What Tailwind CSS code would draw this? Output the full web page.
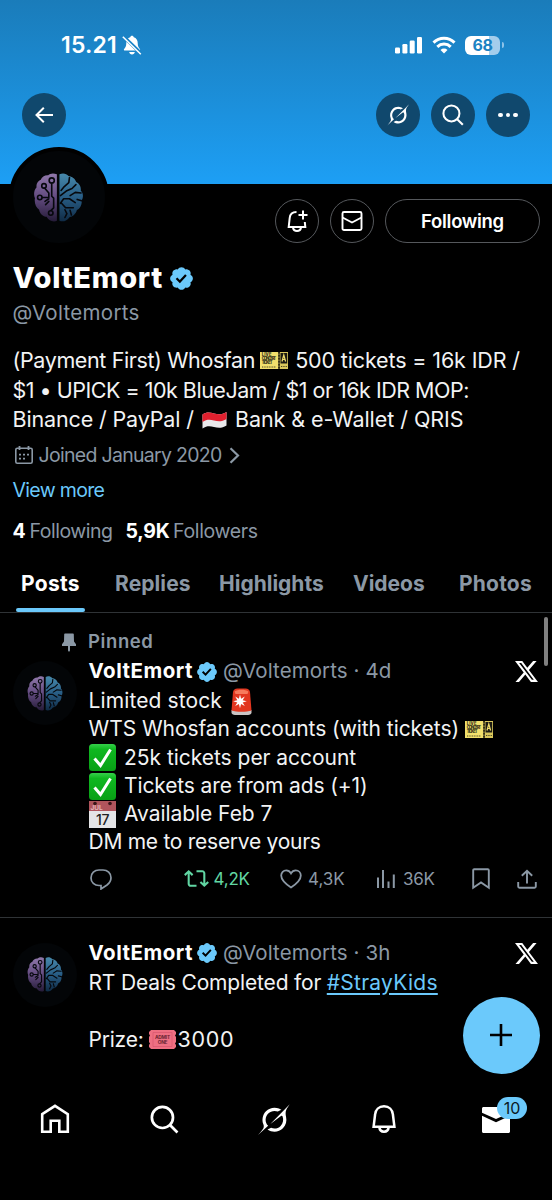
<!DOCTYPE html>
<html lang="en">
<head>
<meta charset="utf-8">
<title>VoltEmort (@Voltemorts)</title>
<script src="https://cdn.jsdelivr.net/npm/@tailwindcss/browser@4"></script>
</head>
<body class="bg-black">
<svg class="absolute size-0">
  <defs>
    <linearGradient id="gl" x1="0" y1="0" x2="0" y2="1"><stop offset="0" stop-color="#9078aa"/><stop offset=".5" stop-color="#634b80"/><stop offset="1" stop-color="#251b38"/></linearGradient>
    <linearGradient id="gr" x1="0" y1="0" x2="0" y2="1"><stop offset="0" stop-color="#4789ab"/><stop offset=".5" stop-color="#285d85"/><stop offset="1" stop-color="#102b45"/></linearGradient>
    <linearGradient id="gg" x1="0" y1="0" x2="0" y2="1"><stop offset="0" stop-color="#35d04a"/><stop offset=".2" stop-color="#0fb820"/><stop offset="1" stop-color="#08a015"/></linearGradient>
    <symbol id="brain" viewBox="38 36 156 152">
      <path fill="url(#gl)" d="M111 40C100 35 90 37 84 43C74 42 64 48 61 57C52 61 46 70 48 80C40 88 38 104 43 114C40 128 46 144 56 150C58 162 68 172 79 172C86 184 100 190 111 184Z"/>
      <path fill="url(#gr)" d="M119 40C130 35 141 38 147 45C158 46 168 54 171 64C181 68 187 80 185 90C193 98 194 112 188 121C189 135 183 147 173 151C170 163 160 172 150 173C143 184 130 189 119 184Z"/>
      <g fill="none" stroke="#06080d" stroke-width="5" stroke-linecap="round" stroke-linejoin="round">
        <circle cx="95" cy="59" r="8"/><circle cx="71" cy="76" r="7"/><circle cx="58" cy="112" r="7"/><circle cx="92" cy="160" r="7"/>
        <path d="M95 68v40l6 6v30l-8 8M74 84l12 14v14M66 112h16M86 124l-10 10M74 124l12-8"/>
        <path d="M150 50l-2 16-14 12-10 12M170 72l-12 12-18 8-18 14M186 98l-18-2-16 10M122 130l10-14 18 0 18 12M188 122l-14-4M124 128l14 16 24 0M152 152l4 14M136 150l6 12-6 12"/>
      </g>
    </symbol>
    <symbol id="badge" viewBox="1.5 1.5 19 19">
      <path fill="#6bc9fb" d="M20.396 11c-.018-.646-.215-1.275-.57-1.816-.354-.54-.852-.972-1.438-1.246.223-.607.27-1.264.14-1.897-.131-.634-.437-1.218-.882-1.687-.47-.445-1.053-.75-1.687-.882-.633-.13-1.29-.083-1.897.14-.273-.587-.704-1.086-1.245-1.44S11.647 1.62 11 1.604c-.646.017-1.273.213-1.813.568s-.969.854-1.24 1.44c-.608-.223-1.267-.272-1.902-.14-.635.13-1.22.436-1.69.882-.445.47-.749 1.055-.878 1.688-.13.633-.08 1.29.144 1.896-.587.274-1.087.705-1.443 1.245-.356.54-.555 1.17-.574 1.817.02.647.218 1.276.574 1.817.356.54.856.972 1.443 1.245-.224.606-.274 1.263-.144 1.896.13.634.433 1.218.877 1.688.47.443 1.054.747 1.687.878.633.132 1.29.084 1.897-.136.274.586.705 1.084 1.246 1.439.54.354 1.17.551 1.816.569.647-.016 1.276-.213 1.817-.567s.972-.854 1.245-1.44c.604.239 1.266.296 1.903.164.636-.132 1.22-.447 1.68-.907.46-.46.776-1.044.908-1.681s.075-1.299-.165-1.903c.586-.274 1.084-.705 1.439-1.246.354-.54.551-1.17.569-1.816z"/>
      <path fill="#000" d="M9.662 14.85l-3.429-3.428 1.293-1.302 2.072 2.072 4.4-4.794 1.347 1.246z"/>
    </symbol>
    <symbol id="grok" viewBox="0 0 33 32">
      <path fill="currentColor" d="M12.745 20.54l10.97-8.19c.539-.4 1.307-.244 1.564.38 1.349 3.288.746 7.241-1.938 9.955-2.683 2.714-6.417 3.31-9.83 1.954l-3.728 1.745c5.347 3.697 11.84 2.782 15.898-1.324 3.219-3.255 4.216-7.692 3.284-11.693l.008.009c-1.351-5.878.332-8.227 3.782-13.031L33 0l-4.54 4.59v-.014L12.743 20.544m-2.263 1.987c-3.837-3.707-3.175-9.446.1-12.755 2.42-2.449 6.388-3.448 9.852-1.979l3.72-1.737c-.67-.49-1.53-1.017-2.515-1.387-4.455-1.854-9.789-.931-13.41 2.728-3.483 3.523-4.579 8.94-2.697 13.561 1.405 3.454-.899 5.898-3.22 8.364C1.49 30.2.666 31.074 0 32l10.478-9.466"/>
    </symbol>
    <symbol id="xlogo" viewBox="1.25 2.25 21.6 19.5">
      <path fill="currentColor" d="M18.244 2.25h3.308l-7.227 8.26 8.502 11.24H16.17l-5.214-6.817L4.99 21.75H1.68l7.73-8.835L1.254 2.25H8.08l4.713 6.231zm-1.161 17.52h1.833L7.084 4.126H5.117z"/>
    </symbol>
    <symbol id="search" viewBox="0 0 28 28">
      <g fill="none" stroke="currentColor" stroke-width="2.6"><circle cx="12" cy="12" r="10.2"/><path d="M19.3 19.3l7.2 7.2"/></g>
    </symbol>
    <symbol id="ticket" viewBox="0 0 28 17">
      <path fill="#f1e06c" d="M0 0h18.500v17H0z"/><path fill="#d9c75c" d="M19.500 0H28v17h-8.500z"/>
      <path fill="#1b1a12" d="M20.500 1h6.700v10.500h-6.700z"/>
      <path fill="none" stroke="#efdc6b" stroke-width="1.200" d="M22 9.500l1.800-6.500 1.800 6.500M22.600 7.500h2.400"/>
      <g fill="#37331a" font-size="4.200" font-weight="800" letter-spacing=".1"><text x="1.800" y="4.200">LIVE</text><text x="1.800" y="8.200" textLength="14.500">CONCERT</text><text x="1.800" y="12.200" textLength="11">TICKET</text></g>
      <g stroke="#4a4522" fill="none"><path stroke-width="1.200" stroke-dasharray="1 .7" d="M2 15h14M21 14.500h6"/><path stroke="#000" stroke-width="1" stroke-dasharray="1.500 1.500" d="M19 0v17"/></g>
    </symbol>
    <symbol id="check" viewBox="0 0 27 27">
      <rect width="27" height="27" rx="3.500" fill="url(#gg)"/>
      <path d="M5.500 14.500l6 7L21.500 5.500" fill="none" stroke="#fff" stroke-width="3"/>
    </symbol>
  </defs>
</svg>

<main class="relative flex h-[1200px] w-[552px] flex-col overflow-hidden bg-black font-['Inter',sans-serif] whitespace-nowrap text-[#f2f3f4] [&_svg]:shrink-0">
  <!-- cover -->
  <header class="h-[184px] shrink-0 bg-linear-to-b from-[#1a7cba] to-[#1d9ff5] px-[22px] text-white">
    <div class="flex h-[90px] items-center pr-[26px] pl-[39px]">
      <span class="text-[23px] font-semibold tracking-[0.19px]">15.21</span>
      <svg class="ml-[5px] size-[20px]" viewBox="0 0 20 20"><path fill="#fff" d="M10 .8c1 0 1.600.6 1.800 1.500 2.600.8 3.900 3 3.900 5.700 0 3.600 1 4.500 2.200 6 .5.700.2 1.600-.8 1.600H2.900c-1 0-1.300-.9-.8-1.600C3.300 12.500 4.300 11.600 4.300 8c0-2.700 1.300-4.900 3.900-5.700C8.400 1.400 9 .8 10 .8zM7.200 17h5.600c-.2 1.400-1.300 2.400-2.800 2.400S7.400 18.400 7.200 17z"/><path stroke="#1a84c8" stroke-width="3.400" d="M1.500 1.500l17.500 17"/><path stroke="#fff" stroke-width="1.500" d="M.8 1.800l18 17.500"/></svg>
      <svg class="ml-auto h-[18px] w-[28px]" viewBox="0 0 28 18" fill="#fff"><rect x="0" y="11.500" width="5" height="6" rx="1.200"/><rect x="7.400" y="8" width="5" height="9.500" rx="1.200"/><rect x="14.700" y="4.500" width="5" height="13" rx="1.200"/><rect x="22" y="1" width="5" height="16.500" rx="1.200"/></svg>
      <svg class="ml-[9px] h-[18px] w-[24px]" viewBox="0 0 24 18"><g fill="none" stroke="#fff" stroke-width="3"><path d="M1.500 6.600a15 15 0 0 1 21 0"/><path d="M5.300 10.800a9.700 9.700 0 0 1 13.400 0"/></g><path fill="#fff" d="M12 17.500l-3.500-3.600a5 5 0 0 1 7 0z"/></svg>
      <div class="ml-[9px] flex h-[19px] w-[35px] items-center justify-center rounded-[6px] bg-linear-to-r from-white from-68% to-[#a3cdec] to-68% text-[16px] font-bold tracking-[-0.3px] text-[#1b82c3]">68</div>
      <div class="ml-[2px] h-[6px] w-[2px] rounded-r-full bg-[#8cc2e8]"></div>
    </div>
    <div class="mt-[3px] flex gap-[11px]">
      <div class="mr-auto flex size-[44px] items-center justify-center rounded-full bg-[#10486d]"><svg class="size-[20px]" viewBox="0 0 20 20" fill="none" stroke="#fff" stroke-width="2"><path d="M19 10H2.500M9.800 2.800L2.500 10l7.300 7.200"/></svg></div>
      <div class="flex size-[44px] items-center justify-center rounded-full bg-[#10486d]"><svg class="size-[22px]"><use href="#grok"/></svg></div>
      <div class="flex size-[44px] items-center justify-center rounded-full bg-[#10486d]"><svg class="size-[22px]"><use href="#search"/></svg></div>
      <div class="flex size-[44px] items-center justify-center gap-[3px] rounded-full bg-[#10486d]"><i class="size-[4.500px] rounded-full bg-white"></i><i class="size-[4.500px] rounded-full bg-white"></i><i class="size-[4.500px] rounded-full bg-white"></i></div>
    </div>
  </header>

  <!-- profile -->
  <section class="h-[377px] shrink-0 pr-[12px] pl-[12.500px]">
    <div class="flex h-[78px] items-start">
      <div class="-mt-[37px] -ml-[4px] flex size-[100px] items-center justify-center rounded-full border-4 border-black bg-[#030507]"><svg class="h-[49px] w-[51px]"><use href="#brain"/></svg></div>
      <div class="mt-[15px] ml-auto flex gap-[11px]">
        <div class="flex size-[44px] items-center justify-center rounded-full border border-[#55585c]"><svg class="size-[24px]" viewBox="0 0 24 24" fill="none" stroke="#fff" stroke-width="2"><path d="M11.500 3C7.500 3 5 5.500 4.700 9l-1 9h16.600l-.5-5"/><path d="M8 18.500c.3 2 1.800 3.500 4 3.500s3.700-1.500 4-3.500M18 1.500v9M13.500 6h9"/></svg></div>
        <div class="flex size-[44px] items-center justify-center rounded-full border border-[#55585c]"><svg class="size-[22px]" viewBox="0 0 22 22" fill="none" stroke="#fff" stroke-width="1.900"><rect x="1.500" y="2" width="19" height="18" rx="1.500"/><path d="M1.500 7.500L11 12.500l9.500-5"/></svg></div>
        <div class="flex h-[44px] w-[155px] items-center justify-center rounded-full border border-[#55585c] pt-px text-[18.500px] font-semibold tracking-[-0.300px] text-white">Following</div>
      </div>
    </div>
    <div class="flex h-[32px] items-center text-white"><span class="text-[29px] font-extrabold tracking-[0.650px]">VoltEmort</span><svg class="ml-[7px] size-[23px]"><use href="#badge"/></svg></div>
    <div class="mt-[5px] flex h-[28px] items-center text-[20.500px] tracking-[0.310px] text-[#8b98a5]">@Voltemorts</div>
    <div class="mt-[19px] text-[21.500px] leading-[29.700px]">
      <div class="flex h-[29.700px] items-center"><span class="tracking-[-0.380px]">(Payment First) Whosfan</span><svg class="ml-[5px] h-[17px] w-[28px]"><use href="#ticket"/></svg><span class="ml-[7px] tracking-[-0.140px]">500 tickets = 16k IDR /</span></div>
      <div class="flex h-[29.700px] items-center"><span class="tracking-[-0.500px]">$1 • UPICK = 10k BlueJam / $1 or 16k IDR MOP:</span></div>
      <div class="flex h-[29.700px] items-center"><span class="tracking-[-0.140px]">Binance / PayPal /</span>
        <svg class="ml-[8px] h-[19px] w-[25px]" viewBox="0 0 25 19"><path fill="#e8e8ea" d="M.5 3.500C5 .5 8 1.500 12 2.500s8 1.500 12.500-1.500v13.500c-4.500 3-8.500 2.500-12.500 1.500s-7-1.500-11.500 1.500z"/><path fill="#e0202e" d="M.5 3.500C5 .5 8 1.500 12 2.500s8 1.500 12.500-1.500v7c-4.500 3-8.500 2.500-12.500 1.500S5 8 .5 11z"/></svg>
        <span class="ml-[8px] tracking-[-0.050px]">Bank &amp; e-Wallet / QRIS</span></div>
    </div>
    <div class="mt-[6px] flex h-[28px] items-center text-[#8b98a5]">
      <svg class="ml-[2.500px] size-[18px]" viewBox="0 0 18 18" fill="none" stroke="currentColor"><rect x=".8" y="2.200" width="16.400" height="15" rx="1.500" stroke-width="1.600"/><path stroke-width="1.800" d="M4.500 0v4M13.500 0v4M4 8.700h2M8 8.700h2M12 8.700h2M4 12.700h2M8 12.700h2"/></svg>
      <span class="ml-[5.500px] w-[182px] pt-px text-[19.500px] tracking-[-0.700px]">Joined January 2020</span>
      <svg class="ml-[8px] h-[17px] w-[11px]" viewBox="0 0 11 17" fill="none" stroke="currentColor" stroke-width="2.200"><path d="M1.500 1.200l7.500 7.300-7.500 7.300"/></svg>
    </div>
    <div class="mt-[7px] flex h-[28px] items-center pt-[2px] text-[19.500px] tracking-[-0.680px] text-[#6bc9fb]">View more</div>
    <div class="mt-[14px] flex h-[28px] items-center text-[19.500px] text-[#8b98a5]"><span class="font-bold tracking-[-0.190px] text-white">4</span><span class="ml-[4px] tracking-[-0.480px]">Following</span><span class="ml-[13px] font-bold tracking-[-0.250px] text-white">5,9K</span><span class="ml-[3.500px] tracking-[-0.350px]">Followers</span></div>
  </section>

  <!-- tabs -->
  <nav class="flex h-[52px] shrink-0 items-center border-b border-[#2f3336] pl-[16px] text-[21px] font-bold text-[#8b98a5]">
    <div class="flex h-full w-[69px] flex-col items-center pt-[7px] text-white"><span class="leading-[32px] tracking-[0.300px]">Posts</span><i class="mt-auto h-[4px] w-full shrink-0 rounded-full bg-[#6bc9fb]"></i></div>
    <div class="-mt-[5px] ml-[30px] flex"><span class="w-[77px] tracking-[0.100px]">Replies</span><span class="ml-[27px] w-[106px]">Highlights</span><span class="ml-[28px] w-[73px]">Videos</span><span class="ml-[33px] w-[74px] tracking-[0.200px]">Photos</span></div>
  </nav>

  <!-- pinned post -->
  <article class="h-[305px] shrink-0 border-b border-[#2f3336] pt-[15px] pr-[14px] pl-[13px]">
    <div class="flex h-[28px] items-center pl-[49px] text-[18.500px] font-semibold text-[#8b98a5]">
      <svg class="h-[19px] w-[14px]" viewBox="0 0 14 19" fill="currentColor"><path d="M3 .5h8c.5 0 .8.300.8.800L12 8.500l2 2.800v1.700H8v4.500l-1 1.500-1-1.500V13H0v-1.700l2-2.800.2-7.200C2.200.8 2.500.5 3 .5z"/></svg>
      <span class="ml-[12px] tracking-[0.600px]">Pinned</span>
    </div>
    <div class="flex gap-[11px]">
      <div class="mt-[5px] flex size-[64px] shrink-0 items-center justify-center rounded-full bg-[#030507]"><svg class="h-[35px] w-[36px]"><use href="#brain"/></svg></div>
      <div class="flex-1">
        <div class="flex h-[31px] items-center text-[20.500px] text-[#8b98a5]"><span class="w-[105px] pl-[0.500px] font-bold tracking-[0.500px] text-white">VoltEmort</span><svg class="ml-[4px] size-[20px]"><use href="#badge"/></svg><span class="ml-[6px] tracking-[0.080px]">@Voltemorts · 4d</span><svg class="ml-auto h-[23px] w-[23px] text-white"><use href="#xlogo"/></svg></div>
        <div class="pl-[0.500px] text-[21px] leading-[28.300px]">
          <div class="flex h-[28.300px] items-center"><span class="tracking-[0.110px]">Limited stock</span>
            <svg class="ml-[9px] h-[27px] w-[21px]" viewBox="0 0 21 27"><path fill="#c9c4c4" d="M.5 22h20v2.500c0 1.500-1.500 2.500-3.500 2.500H4C2 27 .5 26 .5 24.500z"/><path fill="#e2361f" d="M2 4c.3-2 2-3.500 4.500-3.500h8C17 .5 18.700 2 19 4l1.500 18.500c-5 1.800-15 1.800-20 0z"/><path fill="#f77a5c" d="M3.500 3.500C7 1 14 1 17.500 3.500l-1 2.500h-12z"/><path fill="#fff" d="M9 6.500l1.100 4.200 3.700-2.100-2.100 3.600 4.100 1.100-4.100 1.100 2.100 3.700-3.700-2.100L9 20.200l-1.100-4.200-3.700 2.100 2.100-3.700-4.100-1.100 4.100-1.100-2.100-3.600 3.700 2.100z"/></svg></div>
          <div class="flex h-[28.300px] items-center"><span class="tracking-[-0.060px]">WTS Whosfan accounts (with tickets)</span><svg class="ml-[6px] h-[17px] w-[28px]"><use href="#ticket"/></svg></div>
          <div class="flex h-[28.300px] items-center gap-[8px]"><svg class="ml-[0.500px] size-[27px]"><use href="#check"/></svg><span class="tracking-[-0.030px]">25k tickets per account</span></div>
          <div class="flex h-[28.300px] items-center gap-[8px]"><svg class="ml-[0.500px] size-[27px]"><use href="#check"/></svg><span class="tracking-[-0.130px]">Tickets are from ads (+1)</span></div>
          <div class="flex h-[28.300px] items-center gap-[8px]"><svg class="ml-[0.500px] size-[27px]" viewBox="0 0 27 27"><path fill="#e4e4e6" d="M0 0h27v27H0z"/><path fill="#b0545c" d="M0 0h27v10H0z"/><circle cx="6" cy="2.500" r="1.800" fill="#3a1519"/><circle cx="21" cy="2.500" r="1.800" fill="#3a1519"/><text x="1.500" y="9" font-size="6.500" font-weight="700" fill="#e4b5b9">JUL</text><text x="13.500" y="23.500" text-anchor="middle" font-size="14" font-weight="500" letter-spacing="-.5" fill="#222">17</text></svg><span class="tracking-[-0.050px]">Available Feb 7</span></div>
          <div class="flex h-[28.300px] items-center"><span class="tracking-[-0.270px]">DM me to reserve yours</span></div>
        </div>
      </div>
    </div>
    <div class="mt-[7px] flex h-[30px] items-center pl-[77px] text-[17px] text-[#8b98a5]">
      <svg class="size-[22px]" viewBox="0 0 22 22" fill="none" stroke="currentColor" stroke-width="1.700"><path d="M9 17.500C4.500 17.500 1 14.500 1 9.900 1 5.300 4.500 2 9 2h4c4.500 0 8 3.300 8 7.700 0 3.300-1.500 5.300-4 7.300l-6 4v-3.500z"/></svg>
      <svg class="ml-[72px] size-[25px] text-[#61d6a3]" viewBox="0 0 24 24" fill="currentColor"><path d="M4.500 3.880l4.432 4.140-1.364 1.460L5.500 7.550V17c0 .6.400 1 1 1H12v2H6.500c-1.700 0-3-1.300-3-3V7.550L1.432 9.480.068 8.020zM17.500 6H12V4h5.500c1.700 0 3 1.300 3 3v9.450l2.068-1.930 1.364 1.460-4.432 4.140-4.432-4.140 1.364-1.460 2.068 1.930V7c0-.6-.4-1-1-1z"/></svg>
      <span class="ml-[4.500px] w-[37px] pt-px tracking-[-0.200px] text-[#61d6a3]">4,2K</span>
      <svg class="ml-[29.500px] h-[20px] w-[22px]" viewBox="0 0 22 20" fill="none" stroke="currentColor" stroke-width="1.800"><path d="M11 18.500C5 14.500 1.200 10.800 1.200 6.500 1.200 3.500 3.400 1.300 6.200 1.300c2 0 3.700 1 4.800 3 1.100-2 2.800-3 4.800-3 2.800 0 5 2.200 5 5.200 0 4.300-3.800 8-9.800 12z"/></svg>
      <span class="ml-[6px] w-[37px] pt-px">4,3K</span>
      <svg class="ml-[31px] size-[20px]" viewBox="0 0 20 20" stroke="currentColor" stroke-width="2"><path d="M2 19V8.500M7 19V1M12.500 19v-6.500M17.800 19V5.500"/></svg>
      <span class="ml-[7px] w-[32px] pt-px tracking-[-0.300px]">36K</span>
      <svg class="ml-[37px] h-[22px] w-[18px]" viewBox="0 0 18 22" fill="none" stroke="currentColor" stroke-width="1.900"><path d="M1.200 2.200c0-.6.400-1 1-1h13.600c.6 0 1 .4 1 1v17.600L9 14.500l-7.800 5.300z"/></svg>
      <svg class="mr-px ml-auto h-[20px] w-[20px]" viewBox="0 0 20 20" fill="none" stroke="currentColor" stroke-width="1.900"><path d="M1.200 13v4.500c0 .7.500 1.200 1.200 1.200h15.200c.7 0 1.200-.5 1.200-1.200V13M10 14.500V2M4.800 6.800L10 1.800l5.200 5"/></svg>
    </div>
  </article>

  <!-- second post -->
  <article class="flex h-[170px] shrink-0 gap-[11px] pt-[19.500px] pr-[14px] pl-[13px]">
    <div class="mt-[5px] flex size-[64px] shrink-0 items-center justify-center rounded-full bg-[#030507]"><svg class="h-[35px] w-[36px]"><use href="#brain"/></svg></div>
    <div class="flex-1">
      <div class="flex h-[31px] items-center text-[20.500px] text-[#8b98a5]"><span class="w-[105px] pl-[0.500px] font-bold tracking-[0.500px] text-white">VoltEmort</span><svg class="ml-[4px] size-[20px]"><use href="#badge"/></svg><span class="ml-[6px] tracking-[0.080px]">@Voltemorts · 3h</span><svg class="ml-auto h-[23px] w-[23px] text-white"><use href="#xlogo"/></svg></div>
      <div class="flex h-[28.300px] items-center pl-[0.500px] text-[21px]"><span class="tracking-[-0.160px]">RT Deals Completed for</span><span class="ml-[5.500px] tracking-[0.260px] text-[#6bc9fb] underline underline-offset-[3px]">#StrayKids</span></div>
      <div class="mt-[28.300px] flex h-[28.300px] items-center pl-[0.500px] text-[21px]"><span class="tracking-[-0.220px]">Prize:</span>
        <svg class="ml-[5px] h-[19px] w-[27px]" viewBox="0 0 27 19"><path fill="#ee6f82" d="M2 0h23l2 2v2l-1 1.500 1 1.500v5l-1 1.500 1 1.500v2l-2 2H2l-2-2v-2l1-1.500L0 12V7l1-1.500L0 4V2z"/><path fill="none" stroke="#d95870" stroke-width=".8" d="M4 2.500h19v14H4z"/><text x="13.500" y="9" text-anchor="middle" font-size="4.800" font-weight="700" letter-spacing="-.2" fill="#6d2432">ADMIT</text><text x="13.500" y="14" text-anchor="middle" font-size="4.800" font-weight="700" letter-spacing="-.2" fill="#6d2432">ONE</text></svg>
        <span class="ml-[2px] text-[21.500px] tracking-[0.700px]">3000</span></div>
    </div>
  </article>

  <!-- bottom bar -->
  <nav class="flex h-[62px] shrink-0 items-center pl-[40px] text-white">
    <svg class="size-[30px]" viewBox="0 0 30 30" fill="none" stroke="#fff" stroke-width="2.600"><path d="M2.200 10.200L15 1.800l12.800 8.400v17.500h-8.500v-11h-8.600v11H2.200z"/></svg>
    <svg class="ml-[80px] size-[29px]"><use href="#search"/></svg>
    <svg class="ml-[79px] h-[31px] w-[32px]"><use href="#grok"/></svg>
    <svg class="ml-[81px] h-[30px] w-[26px]" viewBox="0 0 26 30" fill="none" stroke="#fff" stroke-width="2.500"><path d="M13 2.300c5 0 8.500 3.400 8.900 8.200l1.500 12.200H2.600l1.500-12.200C4.500 5.700 8 2.300 13 2.300z"/><path d="M8.300 23c.3 2.800 2.200 4.700 4.700 4.700s4.400-1.900 4.700-4.700"/></svg>
    <div class="relative ml-[85px]">
      <svg class="mt-[1px] h-[26px] w-[28px]" viewBox="0 0 28 26"><path fill="#fff" d="M1.500 0h25c.8 0 1.500.7 1.500 1.500v4.200L14 12 0 5.700V1.500C0 .7.700 0 1.500 0zM0 8.800l14 6.400 14-6.400v15.700c0 .8-.7 1.500-1.500 1.500h-25C.7 26 0 25.300 0 24.500z"/></svg>
      <div class="absolute -top-[9px] left-[15px] flex h-[22px] w-[30px] items-center justify-center rounded-full bg-[#6bc9fb] text-[16px] text-[#0b1a26]">10</div>
    </div>
  </nav>

  <!-- floating parts -->
  <button class="absolute top-[996.500px] left-[462.500px] flex size-[77px] items-center justify-center rounded-full bg-[#6bc9fb]"><svg class="size-[22px]" viewBox="0 0 22 22" stroke="#000" stroke-width="2.600"><path d="M11 0v22M0 11h22"/></svg></button>
  <div class="absolute top-[617px] left-[544px] h-[49px] w-[4px] rounded-full bg-[#808080]"></div>
</main>
</body>
</html>
